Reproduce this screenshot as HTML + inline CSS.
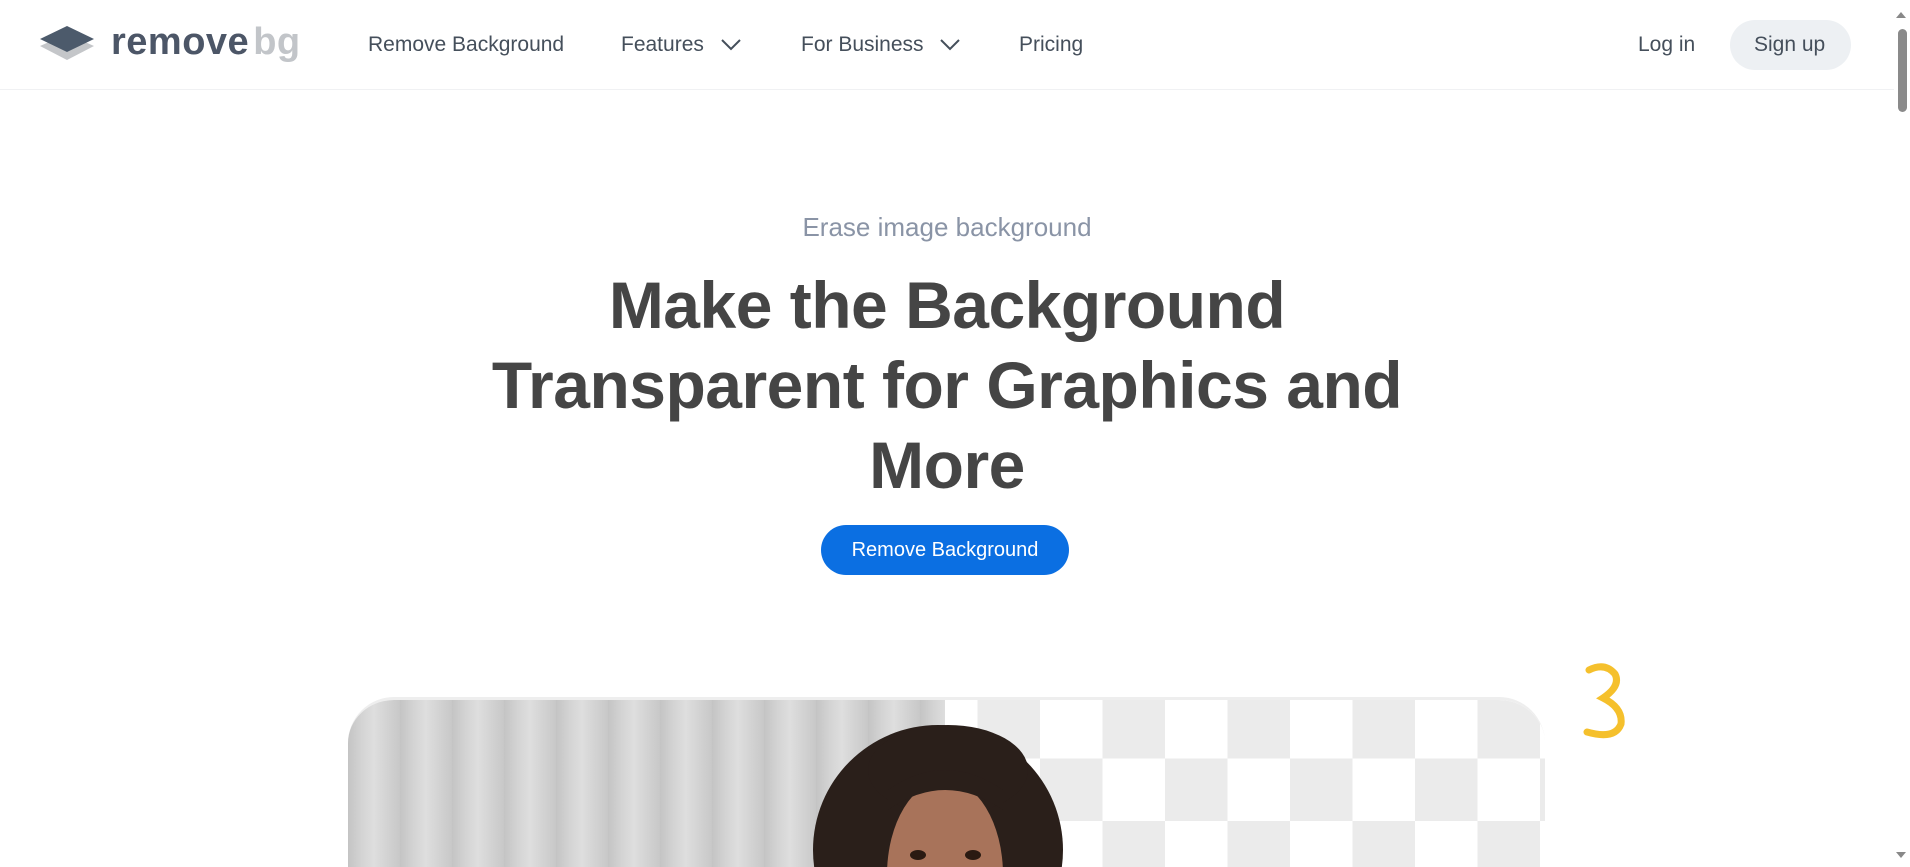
<!DOCTYPE html>
<html><head><meta charset="utf-8"><style>
*{margin:0;padding:0;box-sizing:border-box}
html,body{width:1910px;height:867px;overflow:hidden;background:#fff;font-family:"Liberation Sans",sans-serif}
.nav{position:absolute;left:0;top:0;width:1894px;height:90px;border-bottom:1px solid #f0f1f3;background:#fff}
.nav a{position:absolute;top:33px;font-size:21px;color:#454f5b;text-decoration:none;white-space:nowrap}
.logo{position:absolute;left:111px;top:21px;font-size:38px;font-weight:bold;letter-spacing:0.5px}
.sb{position:absolute;right:0;top:0;width:16px;height:867px;background:#fff}
.hero{position:absolute;left:0;width:1894px;text-align:center}
h1{font-size:66px;font-weight:bold;color:#454545;line-height:80px;letter-spacing:-0.5px}
.btn{position:absolute;left:821px;top:525px;width:248px;height:50px;border-radius:25px;background:#0b6fe2;color:#fff;font-size:20px;text-align:center;line-height:50px}
.card{position:absolute;left:348px;top:697px;width:1197px;height:170px;border-radius:46px 46px 0 0;overflow:hidden;border-top:3px solid #eee}
.curt{position:absolute;left:0;top:0;width:597px;height:170px;background:repeating-linear-gradient(90deg,#c4c4c4 0,#d4d4d4 14px,#dedede 26px,#d2d2d2 40px,#c8c8c8 52px)}
.chk{position:absolute;left:597px;top:0;width:600px;height:170px;background-color:#fff;background-image:linear-gradient(45deg,#ebebeb 25%,transparent 25%,transparent 75%,#ebebeb 75%),linear-gradient(45deg,#ebebeb 25%,transparent 25%,transparent 75%,#ebebeb 75%);background-size:125px 125px;background-position:-30px -4px,32.5px 58.5px}
</style></head><body>
<div class="nav">
<svg style="position:absolute;left:38px;top:24px" width="58" height="42" viewBox="0 0 58 42"><path d="M2 22 L29 10 L56 22 L29 36 Z" fill="#c4c6c9"/><path d="M2 15 L29 2 L56 15 L29 28 Z" fill="#4c5a6b"/></svg>
<div class="logo"><span style="color:#4c5667">remove</span><span style="color:#c2c5c9;margin-left:4px">bg</span></div>
<a style="left:368px">Remove Background</a>
<a style="left:621px">Features</a>
<svg style="position:absolute;left:720px;top:38px" width="22" height="14"><path d="M2 2 L11 11 L20 2" fill="none" stroke="#454f5b" stroke-width="2"/></svg>
<a style="left:801px">For Business</a>
<svg style="position:absolute;left:939px;top:38px" width="22" height="14"><path d="M2 2 L11 11 L20 2" fill="none" stroke="#454f5b" stroke-width="2"/></svg>
<a style="left:1019px">Pricing</a>
<a style="left:1638px">Log in</a>
<div style="position:absolute;left:1730px;top:20px;width:121px;height:50px;border-radius:25px;background:#edf0f3"></div>
<a style="left:1754px">Sign up</a>
</div>
<div class="sb"><div style="position:absolute;left:2px;top:12px;width:0;height:0;border:5px solid transparent;border-bottom:6px solid #888;border-top:0"></div><div style="position:absolute;left:4px;top:29px;width:9px;height:83px;border-radius:5px;background:#8a8a8a"></div><div style="position:absolute;left:2px;top:852px;width:0;height:0;border:5px solid transparent;border-top:6px solid #888;border-bottom:0"></div></div>
<div class="hero" style="top:212px;font-size:26px;color:#8a94a6">Erase image background</div>
<div class="hero" style="top:265px"><h1>Make the Background<br>Transparent for Graphics and<br>More</h1></div>
<div class="btn">Remove Background</div>
<div class="card"><div class="curt"></div><div class="chk"></div>
<svg style="position:absolute;left:0;top:0" width="1197" height="170"><ellipse cx="590" cy="150" rx="125" ry="125" fill="#2a1f1a"/><ellipse cx="600" cy="70" rx="80" ry="45" fill="#2a1f1a"/><ellipse cx="597" cy="175" rx="58" ry="95" fill="#a8735a"/><path d="M540 110 Q597 70 655 110 L655 90 Q597 50 540 90Z" fill="#2a1f1a"/><ellipse cx="570" cy="155" rx="8" ry="5" fill="#2a1a12"/><ellipse cx="625" cy="155" rx="8" ry="5" fill="#2a1a12"/></svg>
</div>
<svg style="position:absolute;left:1565px;top:660px" width="70" height="90"><path d="M24 10 Q40 2 50 14 Q56 26 38 38 Q58 48 56 64 Q50 80 22 72" fill="none" stroke="#f5c02c" stroke-width="7" stroke-linecap="round"/></svg>
</body></html>
